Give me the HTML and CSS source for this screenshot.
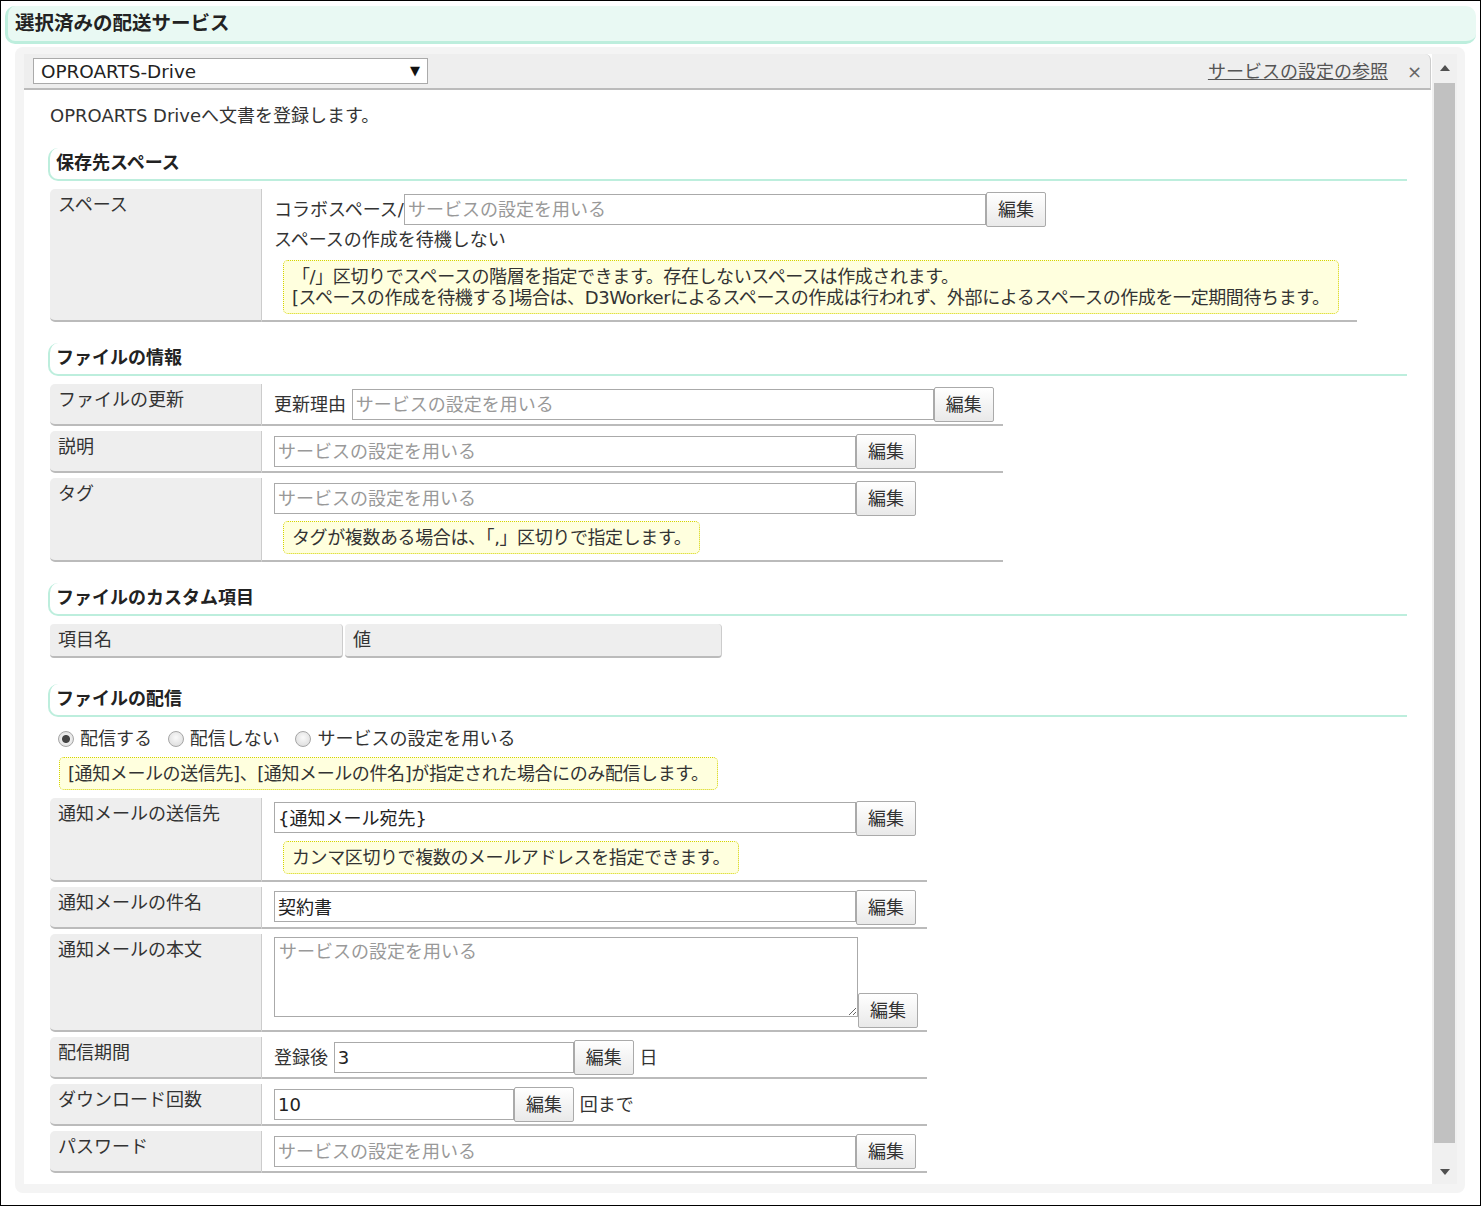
FILE: index.html
```html
<!DOCTYPE html>
<html lang="ja">

<head>
    <meta charset="UTF-8">
    <meta name="viewport" content="width=device-width, initial-scale=1.0">
    <title>選択済みの配送サービス</title>
    <link rel="stylesheet" href="styles.css">
</head>

<body>
    <div class="frame">
        <!-- 見出し -->
        <h2 class="page-title">選択済みの配送サービス</h2>

        <div class="panel">
            <div class="window">
                <div class="window-main">
                    <!-- サービス選択タブ -->
                    <div class="tab-bar">
                        <span class="select-wrap"><select class="service-select"><option>OPROARTS-Drive</option></select></span>
                        <a class="ref-link" href="#">サービスの設定の参照</a>
                        <span class="close">×</span>
                    </div>

                    <div class="content">
                        <p class="intro">OPROARTS Driveへ文書を登録します。</p>

                        <!-- 保存先スペース -->
                        <h3 class="sec-title">保存先スペース</h3>
                        <table class="form-table">
                            <tr>
                                <th>スペース</th>
                                <td>コラボスペース/<input class="txt" placeholder="サービスの設定を用いる"><button class="btn">編集</button>
                                    <div class="sub-line">スペースの作成を待機しない</div>
                                    <div class="note">「/」区切りでスペースの階層を指定できます。存在しないスペースは作成されます。<br>[スペースの作成を待機する]場合は、D3Workerによるスペースの作成は行われず、外部によるスペースの作成を一定期間待ちます。</div>
                                </td>
                            </tr>
                        </table>

                        <!-- ファイルの情報 -->
                        <h3 class="sec-title">ファイルの情報</h3>
                        <table class="form-table">
                            <tr>
                                <th>ファイルの更新</th>
                                <td>更新理由 <input class="txt" placeholder="サービスの設定を用いる"><button class="btn">編集</button></td>
                            </tr>
                            <tr>
                                <th>説明</th>
                                <td><input class="txt" placeholder="サービスの設定を用いる"><button class="btn">編集</button></td>
                            </tr>
                            <tr>
                                <th>タグ</th>
                                <td><input class="txt" placeholder="サービスの設定を用いる"><button class="btn">編集</button>
                                    <div class="note">タグが複数ある場合は、「,」区切りで指定します。</div>
                                </td>
                            </tr>
                        </table>

                        <!-- ファイルのカスタム項目 -->
                        <h3 class="sec-title">ファイルのカスタム項目</h3>
                        <table class="custom-table">
                            <tr>
                                <th class="col-name">項目名</th>
                                <th class="col-value">値</th>
                            </tr>
                        </table>

                        <!-- ファイルの配信 -->
                        <h3 class="sec-title">ファイルの配信</h3>
                        <div class="radio-row">
                            <label><input type="radio" class="radio" name="dist" checked>配信する</label>
                            <label><input type="radio" class="radio" name="dist">配信しない</label>
                            <label><input type="radio" class="radio" name="dist">サービスの設定を用いる</label>
                        </div>
                        <div class="note note-block">[通知メールの送信先]、[通知メールの件名]が指定された場合にのみ配信します。</div>
                        <table class="form-table mail-table">
                            <tr>
                                <th>通知メールの送信先</th>
                                <td><input class="txt" value="{通知メール宛先}"><button class="btn">編集</button>
                                    <div class="note">カンマ区切りで複数のメールアドレスを指定できます。</div>
                                </td>
                            </tr>
                            <tr>
                                <th>通知メールの件名</th>
                                <td><input class="txt" value="契約書"><button class="btn">編集</button></td>
                            </tr>
                            <tr>
                                <th>通知メールの本文</th>
                                <td><textarea class="area" placeholder="サービスの設定を用いる"></textarea><button class="btn">編集</button></td>
                            </tr>
                            <tr>
                                <th>配信期間</th>
                                <td>登録後 <input class="txt txt-short" value="3"><button class="btn">編集</button> 日</td>
                            </tr>
                            <tr>
                                <th>ダウンロード回数</th>
                                <td><input class="txt txt-short" value="10"><button class="btn">編集</button> 回まで</td>
                            </tr>
                            <tr>
                                <th>パスワード</th>
                                <td><input class="txt" placeholder="サービスの設定を用いる"><button class="btn">編集</button></td>
                            </tr>
                        </table>
                    </div>
                </div>

                <!-- スクロールバー -->
                <div class="scrollbar">
                    <span class="sb-btn"><i class="arrow-up"></i></span>
                    <span class="sb-thumb"></span>
                    <span class="sb-space"></span>
                    <span class="sb-btn sb-btn-down"><i class="arrow-down"></i></span>
                </div>
            </div>
        </div>
    </div>
</body>

</html>
```

FILE: styles.css
```css
* {
    box-sizing: border-box;
}

html,
body {
    margin: 0;
    padding: 0;
}

body {
    font-family: "DejaVu Sans", "Noto Sans CJK JP", sans-serif;
    font-size: 18px;
    line-height: 21px;
    color: #333;
    background: #fff;
}

/* 外枠 */
.frame {
    width: 1481px;
    height: 1206px;
    border: 1px solid #000;
    padding: 5px 4px 0 4px;
    display: flex;
    flex-direction: column;
}

.page-title {
    margin: 0;
    padding: 5px 8px 4px 7px;
    font-size: 19.5px;
    line-height: 26px;
    font-weight: bold;
    color: #222;
    background: #e9f9f3;
    border-left: 3px solid #bdeedd;
    border-bottom: 3px solid #bdeedd;
    border-radius: 10px;
}

.panel {
    margin: 3px 11px 0 10px;
    padding: 7px 8px 9px 9px;
    height: 1146px;
    background: #f4f4f4;
    border-radius: 8px;
}

.window {
    display: flex;
    height: 100%;
    background: #fff;
}

.window-main {
    flex: 1;
    min-width: 0;
    overflow: hidden;
}

/* タブ */
.tab-bar {
    display: flex;
    align-items: center;
    height: 36px;
    margin-right: 1px;
    padding: 0 8px 0 9px;
    background: #eee;
    border-bottom: 2px solid #bbb;
    border-right: 1px solid #ccc;
    border-top-right-radius: 6px;
}

.select-wrap {
    position: relative;
    display: inline-block;
}

.service-select {
    appearance: none;
    -webkit-appearance: none;
    width: 395px;
    height: 26px;
    margin: 0;
    padding: 0 0 0 7px;
    border: 1px solid #aaa;
    border-radius: 0;
    background: #fff;
    font: inherit;
    font-size: 18.4px;
    color: #222;
}

.select-wrap::after {
    content: "▼";
    position: absolute;
    right: 8px;
    top: 2px;
    font-size: 13px;
    line-height: 22px;
    color: #111;
    pointer-events: none;
}

.ref-link {
    margin-left: auto;
    color: #555;
    text-decoration: underline;
}

.close {
    margin-left: 19px;
    color: #666;
}

/* 本文 */
.content {
    padding: 15px 25px 0 24px;
}

.intro {
    margin: 0 0 22px 2px;
}

.sec-title {
    margin: 16px 0 3px;
    padding: 4px 8px 6px 6px;
    font-size: 18px;
    line-height: 21px;
    font-weight: bold;
    color: #222;
    border-left: 2px solid #bdeedd;
    border-bottom: 2px solid #bdeedd;
    border-radius: 10px 0 0 10px;
}

/* フォーム表 */
.form-table {
    border-collapse: separate;
    border-spacing: 0 5px;
    margin-left: 2px;
}

.form-table th {
    width: 212px;
    padding: 5px 8px;
    text-align: left;
    font-weight: normal;
    vertical-align: top;
    white-space: nowrap;
    background: #eee;
    border-right: 1px solid #ccc;
    border-bottom: 2px solid #bbb;
    border-radius: 5px 0 0 5px;
}

.form-table td {
    padding: 3px 9px 2px 12px;
    vertical-align: top;
    white-space: nowrap;
    border-bottom: 2px solid #bbb;
}

.txt {
    width: 582px;
    height: 31px;
    margin: 0;
    padding: 0 3px;
    border: 1px solid #aaa;
    border-radius: 0;
    font: inherit;
    color: #222;
}

.txt-short {
    width: 240px;
}

.txt::placeholder,
.area::placeholder {
    color: #999;
}

.area {
    width: 584px;
    height: 80px;
    margin: 0;
    padding: 3px 4px;
    border: 1px solid #aaa;
    font: inherit;
    color: #222;
}

.btn {
    height: 35px;
    margin: 0;
    padding: 0 11px;
    border: 1px solid #aaa;
    border-radius: 2px;
    background: linear-gradient(#fff, #e9e9e9);
    font: inherit;
    color: #333;
}

.sub-line {
    margin-top: 2px;
}

/* 注意書き */
.note {
    width: fit-content;
    margin: 5px 9px 4px 9px;
    padding: 5px 8px;
    letter-spacing: -0.4px;
    background: #ffffde;
    border: 1px dotted #d4d400;
    border-radius: 5px;
}

.sub-line + .note {
    margin-top: 10px;
}

.note-block {
    margin: 8px 0 0 11px;
}

.mail-table {
    margin-top: 3px;
}

/* カスタム項目 */
.custom-table {
    border-collapse: separate;
    border-spacing: 2px 5px;
}

.custom-table + .sec-title {
    margin-top: 21px;
}

.custom-table th {
    padding: 5px 8px 6px;
    text-align: left;
    font-weight: normal;
    background: #eee;
    border-right: 1px solid #ccc;
    border-bottom: 2px solid #bbb;
    border-radius: 4px;
}

.col-name {
    width: 293px;
}

.col-value {
    width: 377px;
}

/* 配信ラジオ */
.radio-row {
    margin-top: 11px;
}

.radio {
    appearance: none;
    -webkit-appearance: none;
    width: 16px;
    height: 16px;
    margin: 0 6px 0 10px;
    border: 1px solid #a6a6a6;
    border-radius: 50%;
    background: radial-gradient(circle at 50% 40%, #fafafa, #d8d8d8);
    vertical-align: -2px;
}

.radio:checked {
    background: radial-gradient(circle, #444 0 3.5px, #eee 4.5px, #d8d8d8);
}

/* スクロールバー */
.scrollbar {
    width: 25px;
    display: flex;
    flex-direction: column;
    padding: 0 2px;
    background: #f0f0f0;
}

.sb-btn {
    height: 27px;
    display: flex;
    align-items: center;
    justify-content: center;
}

.sb-btn-down {
    height: 24px;
}

.sb-thumb {
    height: 1060px;
    margin-top: 2px;
    background: #c1c1c1;
}

.sb-space {
    flex: 1;
}

.arrow-up,
.arrow-down {
    width: 0;
    height: 0;
    border-left: 5px solid transparent;
    border-right: 5px solid transparent;
}

.arrow-up {
    border-bottom: 6px solid #505050;
}

.arrow-down {
    border-top: 6px solid #505050;
}
```
